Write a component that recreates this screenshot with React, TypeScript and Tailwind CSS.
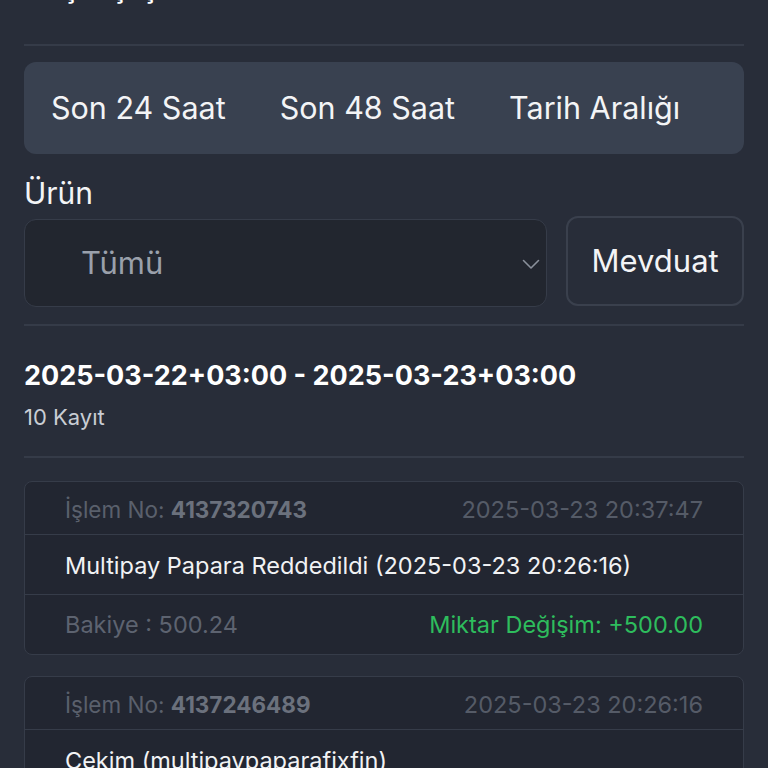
type Txn = {
  no: string;
  date: string;
  desc: string;
  balance: string;
  change: string;
};

const rows: Txn[] = [
  {
    no: "4137320743",
    date: "2025-03-23 20:37:47",
    desc: "Multipay Papara Reddedildi (2025-03-23 20:26:16)",
    balance: "500.24",
    change: "+500.00",
  },
  {
    no: "4137246489",
    date: "2025-03-23 20:26:16",
    desc: "Çekim (multipaypaparafixfin)",
    balance: "0.24",
    change: "-500.00",
  },
];

function TxnCard({ t }: { t: Txn }) {
  return (
    <div className="rounded-[8px] border border-[#363c49] bg-[#222631] text-[23.5px]">
      <div className="flex h-[53px] items-center justify-between px-10 pt-[3px] border-b border-[#363c49]">
        <span className="text-[22.5px] text-[#5a606c]">
          İşlem No: <b className="font-bold text-[#6b717d]">{t.no}</b>
        </span>
        <span className="text-[#555b67]">{t.date}</span>
      </div>
      <div className="flex h-[60px] items-center px-10 pt-[3px] border-b border-[#363c49] text-[#f1f2f4]">
        {t.desc}
      </div>
      <div className="flex h-[59px] items-center justify-between px-10">
        <span className="text-[#5d6370]">Bakiye : {t.balance}</span>
        <span className="text-[#2ebd5d]">Miktar Değişim: {t.change}</span>
      </div>
    </div>
  );
}

export default function App() {
  return (
    <div
      className="h-[768px] overflow-hidden bg-[#282d39] px-6 text-white"
      style={{ fontFamily: "Inter, 'Noto Sans', sans-serif" }}
    >
      <h1 className="-mt-[28px] text-[28px] leading-8 font-bold">Geçmiş İşlemler</h1>
      <div className="mt-[40px] h-[2px] bg-[#353b48]" />

      <div className="mt-[16px] flex h-[92px] items-center gap-[54px] rounded-[12px] bg-[#394150] pl-[27px] text-[30.5px] text-[#f3f4f6]">
        <span>Son 24 Saat</span>
        <span>Son 48 Saat</span>
        <span>Tarih Aralığı</span>
      </div>

      <div className="mt-[21px] text-[30px] leading-9 text-[#f3f4f6]">Ürün</div>

      <div className="mt-[5px] flex items-start gap-[19px]">
        <div className="mt-[3px] flex h-[88px] w-[524px] items-center justify-between rounded-[12px] border border-[#363c49] bg-[#22262f] pl-[56px] pr-[6px]">
          <span className="text-[31px] text-[#9aa0ab]">Tümü</span>
          <svg width="18" height="11" viewBox="0 0 18 11" fill="none" className="mt-[2px]">
            <polyline
              points="1.5,1.5 9,9 16.5,1.5"
              stroke="#8a909b"
              strokeWidth="1.6"
              strokeLinecap="round"
              strokeLinejoin="round"
            />
          </svg>
        </div>
        <button className="flex h-[90px] w-[178px] items-center justify-center rounded-[12px] border-2 border-[#3a404d] text-[31px] text-[#f3f4f6]">
          Mevduat
        </button>
      </div>

      <div className="mt-[17px] h-[2px] bg-[#353b48]" />

      <div className="mt-[33px] text-[27px] leading-[34px] font-bold text-white">
        2025-03-22+03:00 - 2025-03-23+03:00
      </div>
      <div className="mt-[10px] text-[22px] leading-7 text-[#c9cdd4]">10 Kayıt</div>

      <div className="mt-[25px] h-[2px] bg-[#353b48]" />

      <div className="mt-[23px] flex flex-col gap-[21px]">
        {rows.map((t) => (
          <TxnCard key={t.no} t={t} />
        ))}
      </div>
    </div>
  );
}
